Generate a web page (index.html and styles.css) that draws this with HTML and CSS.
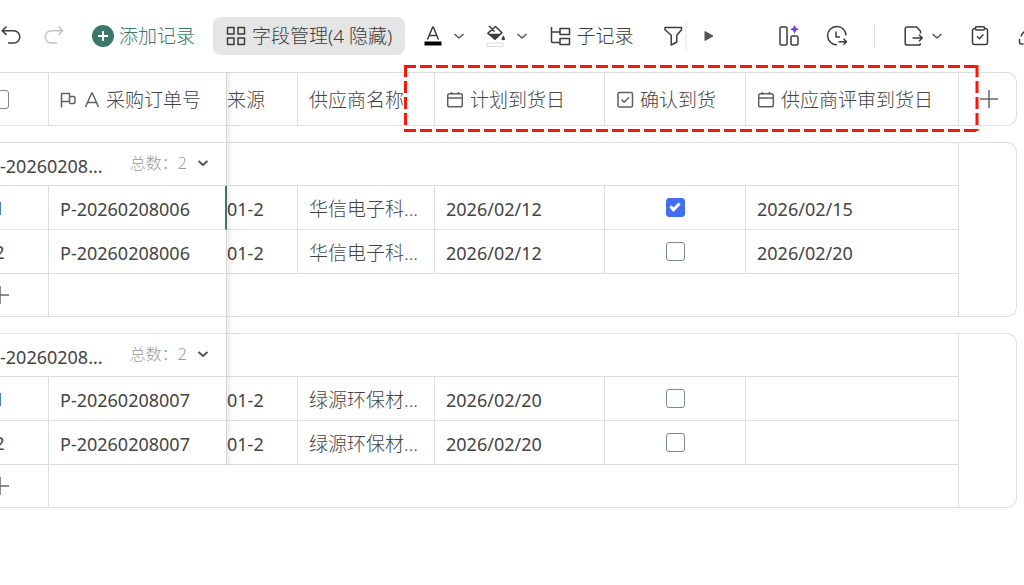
FILE: index.html
```html
<!DOCTYPE html>
<html lang="zh-CN">
<head>
<meta charset="utf-8">
<meta name="viewport" content="width=device-width, initial-scale=1">
<title>采购订单</title>
<link rel="stylesheet" href="styles.css">
</head>
<body>
<svg class="defs" aria-hidden="true">
  <symbol id="chevron" viewBox="0 0 12 12"><path d="M1.500 4 6 8l4.500-4"/></symbol>
  <symbol id="calendar" viewBox="0 0 18 18"><path d="M3.500 2.800h11a1.800 1.800 0 0 1 1.800 1.800v9.300a1.800 1.800 0 0 1-1.800 1.800h-11a1.800 1.800 0 0 1-1.800-1.800V4.600a1.800 1.800 0 0 1 1.800-1.800zM1.700 7h14.600M5.500 1v2.800M12.500 1v2.800"/></symbol>
  <symbol id="plus" viewBox="0 0 20 20"><path d="M10 1v18M1 10h18"/></symbol>
</svg>

<header class="toolbar">
  <div class="history">
    <button class="tool" aria-label="撤销"><svg class="icon-lg" viewBox="0 0 22 22"><path d="M6.500 1.500 2.200 5.700l4.300 4.200M2.400 5.700h11.300a5.900 5.900 0 0 1 0 12.300H8"/></svg></button>
    <button class="tool disabled" aria-label="重做" disabled><svg class="icon-lg" viewBox="0 0 22 22"><path d="M15.500 1.500 19.800 5.700l-4.300 4.200M19.600 5.700H8.300a5.900 5.900 0 0 0 0 12.300H14"/></svg></button>
  </div>
  <button class="tool add"><svg class="icon-add" viewBox="0 0 24 24"><circle cx="12" cy="12" r="11"/><path d="M12 7v10M7 12h10"/></svg><span>添加记录</span></button>
  <button class="tool pill"><svg class="icon-md" viewBox="0 0 20 20"><path d="M1.500 1.500h6.500v6.500H1.500zM12 1.500h6.500v6.500H12zM1.500 12h6.500v6.500H1.500zM12 12h6.500v6.500H12z"/></svg><span>字段管理(4 隐藏)</span></button>
  <div class="tools">
    <div class="split">
      <button class="tool" aria-label="文字颜色"><svg class="icon-md" viewBox="0 0 20 20"><path d="M4.500 13.500 9.700 1h.6l5.200 12.500M6.300 9.500h7.400"/><path class="ink" d="M1.500 15.500h17v4h-17z"/></svg></button>
      <button class="tool" aria-label="文字颜色选项"><svg class="icon-sm"><use href="#chevron"/></svg></button>
    </div>
    <div class="split">
      <button class="tool" aria-label="填充颜色"><svg class="icon-fill" viewBox="0 0 20 22"><path d="M1.800 8.200 9.500 1.500l6.500 6.200-7 6.600zM3 1l5.500 5.500M8.500 2.500 3.500 7"/><path class="solid" d="M1.800 8.800h13.400l-6.300 5.800zM17.300 10.500q3.400 4.400 0 4.800-3.400-.4 0-4.800z"/><path class="swatch" d="M1 18h16v3.500H1z"/></svg></button>
      <button class="tool" aria-label="填充颜色选项"><svg class="icon-sm"><use href="#chevron"/></svg></button>
    </div>
    <button class="tool child"><svg class="icon-lg" viewBox="0 0 22 22"><path d="M2.500 2v14.500a1 1 0 0 0 1 1H11M2.500 7H11M11 3.500h9.500v6H11zM11 13.500h9.500v6H11z"/></svg><span>子记录</span></button>
    <div class="filter">
      <button class="tool" aria-label="筛选"><svg class="icon-lg" viewBox="0 0 22 22"><path d="M2 2.500h16.500v2.200l-4.700 5.600V17l-5.600 3v-9.700L2 4.700z"/></svg></button>
      <button class="tool" aria-label="更多工具"><svg class="icon-play" viewBox="0 0 16 16"><path d="M4 3.500v9l8-4.500z"/></svg></button>
    </div>
  </div>
  <div class="actions">
    <button class="tool" aria-label="智能字段"><svg class="icon-lg" viewBox="0 0 22 22"><rect x="2" y="2" width="7" height="18" rx="1.500"/><rect x="13" y="11" width="7" height="9" rx="1.500"/><path class="spark" d="M16.500 0 18 3l3 1.200L18 5.500l-1.500 3.200L15 5.500l-3-1.300L15 3z"/></svg></button>
    <button class="tool" aria-label="历史记录"><svg class="icon-lg" viewBox="0 0 22 22"><path d="M11 19.800A9.200 9.200 0 1 1 20 10.500M10 6.500V12h4M12.500 16.700h8M17.500 13.700l3 3-3 3"/></svg></button>
    <span class="divider"></span>
    <div class="export">
      <button class="tool" aria-label="导出"><svg class="icon-lg" viewBox="0 0 22 22"><path d="M17.500 8.500V6.200L13.700 2H4a1.800 1.800 0 0 0-1.800 1.800v14.400A1.800 1.800 0 0 0 4 20h11.700a1.800 1.800 0 0 0 1.800-1.800M9.500 13h9.800M16 9.700l3.300 3.300-3.300 3.300"/></svg></button>
      <button class="tool" aria-label="导出选项"><svg class="icon-sm"><use href="#chevron"/></svg></button>
    </div>
    <button class="tool" aria-label="任务"><svg class="icon-lg" viewBox="0 0 22 22"><path d="M6.500 3.500H5.500A2 2 0 0 0 3.500 5.500v12a2 2 0 0 0 2 2h11a2 2 0 0 0 2-2v-12a2 2 0 0 0-2-2h-1M7.500 1.800h7a1 1 0 0 1 1 1V4a1 1 0 0 1-1 1h-7a1 1 0 0 1-1-1V2.800a1 1 0 0 1 1-1zM8 11.300l2.400 2.400 4-4.200"/></svg></button>
    <button class="tool" aria-label="分享"><svg class="icon-lg" viewBox="0 0 22 22"><path d="M6.500 19H4a1.500 1.500 0 0 1-1.500-1.500V14M4 11.500q1-3.800 4.500-5.500L15 3"/></svg></button>
  </div>
</header>

<main class="sheet">
  <section class="card heading">
    <table>
      <colgroup><col class="c-index"><col class="c-order"><col class="c-source"><col class="c-vendor"><col class="c-plan"><col class="c-confirm"><col><col class="c-end"></colgroup>
      <thead>
        <tr>
          <th class="index"><input type="checkbox" aria-label="全选"></th>
          <th class="plain"><span class="field order"><svg class="icon-field" viewBox="0 0 18 18"><path d="M1.500 16.500V2.500h8v8h-8M9.500 5.500h4a1.500 1.500 0 0 1 1.500 1.500v4a1.500 1.500 0 0 1-1.500 1.500h-3a1 1 0 0 1-1-1v-1"/></svg><svg class="icon-field" viewBox="0 0 18 18"><path d="M2.500 16 8.700 2h.6l6.200 14M4.700 11.500h8.600"/></svg>采购订单号</span></th>
          <th class="flush">来源</th>
          <th>供应商名称</th>
          <th><span class="field"><svg class="icon-field"><use href="#calendar"/></svg>计划到货日</span></th>
          <th><span class="field"><svg class="icon-field" viewBox="0 0 18 18"><rect x="2" y="1.500" width="14.500" height="14.500" rx="1.500"/><path d="M5.500 8.500l2.700 2.700 4.800-5"/></svg>确认到货</span></th>
          <th><span class="field"><svg class="icon-field"><use href="#calendar"/></svg>供应商评审到货日</span></th>
          <th class="end"><button class="tool new-field" aria-label="添加字段"><svg class="icon-md"><use href="#plus"/></svg></button></th>
        </tr>
      </thead>
    </table>
    <svg class="highlight" aria-hidden="true"><line x1="0" y1="1.500" x2="100%" y2="1.500"/><line x1="0" y1="65.500" x2="100%" y2="65.500"/><line x1="1.500" y1="0" x2="1.500" y2="66"/><line x1="100%" y1="0" x2="100%" y2="66"/></svg>
  </section>

  <section class="card">
    <table>
      <colgroup><col class="c-index"><col class="c-order"><col class="c-source"><col class="c-vendor"><col class="c-plan"><col class="c-confirm"><col><col class="c-end"></colgroup>
      <tbody>
        <tr class="group">
          <td class="plain" colspan="2"><div class="group-title"><span>-20260208...</span><button class="tool total">总数：2<svg class="icon-sm"><use href="#chevron"/></svg></button></div></td>
          <td colspan="5"></td>
          <td class="end" rowspan="4"></td>
        </tr>
        <tr>
          <td class="index">1</td><td class="plain current">P-20260208006</td><td class="flush">01-2</td><td class="vendor">华信电子科...</td><td>2026/02/12</td>
          <td class="check"><input type="checkbox" aria-label="确认到货" checked></td><td>2026/02/15</td>
        </tr>
        <tr>
          <td class="index">2</td><td class="plain">P-20260208006</td><td class="flush">01-2</td><td class="vendor">华信电子科...</td><td>2026/02/12</td>
          <td class="check"><input type="checkbox" aria-label="确认到货"></td><td>2026/02/20</td>
        </tr>
        <tr class="append">
          <td class="index"><button class="tool new-row" aria-label="添加行"><svg class="icon-md"><use href="#plus"/></svg></button></td><td colspan="6"></td>
        </tr>
      </tbody>
    </table>
  </section>

  <section class="card">
    <table>
      <colgroup><col class="c-index"><col class="c-order"><col class="c-source"><col class="c-vendor"><col class="c-plan"><col class="c-confirm"><col><col class="c-end"></colgroup>
      <tbody>
        <tr class="group">
          <td class="plain" colspan="2"><div class="group-title"><span>-20260208...</span><button class="tool total">总数：2<svg class="icon-sm"><use href="#chevron"/></svg></button></div></td>
          <td colspan="5"></td>
          <td class="end" rowspan="4"></td>
        </tr>
        <tr>
          <td class="index">1</td><td class="plain">P-20260208007</td><td class="flush">01-2</td><td class="vendor">绿源环保材...</td><td>2026/02/20</td>
          <td class="check"><input type="checkbox" aria-label="确认到货"></td><td></td>
        </tr>
        <tr>
          <td class="index">2</td><td class="plain">P-20260208007</td><td class="flush">01-2</td><td class="vendor">绿源环保材...</td><td>2026/02/20</td>
          <td class="check"><input type="checkbox" aria-label="确认到货"></td><td></td>
        </tr>
        <tr class="append">
          <td class="index"><button class="tool new-row" aria-label="添加行"><svg class="icon-md"><use href="#plus"/></svg></button></td><td colspan="6"></td>
        </tr>
      </tbody>
    </table>
  </section>
  <div class="freeze-edge"></div>
</main>
</body>
</html>
```
FILE: styles.css
```css
* { box-sizing: border-box; }

body {
  margin: 0;
  overflow-x: hidden;
  background: #fff;
  color: #444;
  font: 400 18px/24px "Noto Sans", "Noto Sans CJK SC", sans-serif;
}

.defs { position: absolute; width: 0; height: 0; }

svg { display: block; flex: none; fill: none; stroke: currentColor; stroke-width: 1.5; stroke-linejoin: round; }
.icon-lg { width: 22px; height: 22px; }
.icon-md { width: 20px; height: 20px; }
.icon-fill { width: 20px; height: 22px; }
.icon-sm { width: 12px; height: 12px; color: #555; }
.icon-play { width: 16px; height: 16px; fill: #555; stroke: #555; stroke-width: 1; }
.icon-add { width: 24px; height: 24px; }
.icon-add circle { fill: #39786a; stroke: none; }
.icon-add path { stroke: #fff; stroke-width: 2; }
.icon-field { width: 18px; height: 18px; color: #606060; }
.solid { fill: currentColor; stroke: none; }
.ink { fill: #000; stroke: none; }
.swatch { stroke: #ddd; stroke-width: 1; }
.spark { fill: #6a3de8; stroke: none; }

.tool {
  display: flex;
  align-items: center;
  gap: 6px;
  padding: 0;
  border: 0;
  background: none;
  color: #3c3c3c;
  font: inherit;
  font-size: 19px;
  font-weight: 300;
  white-space: nowrap;
}

.toolbar {
  display: flex;
  align-items: center;
  gap: 18px;
  height: 72px;
  overflow: hidden;
}
.history { display: flex; align-items: center; gap: 21px; }
.tools { display: flex; align-items: center; gap: 21px; }
.tool.disabled { color: #c4c4c4; }
.tool.add { gap: 4px; padding-left: 8px; color: #39786a; }
.tool.pill { height: 38px; padding: 0 13px; border-radius: 8px; background: #e5e5e5; }
.tool.child { gap: 5px; }
.split { display: flex; align-items: center; gap: 10px; }
.filter { display: flex; align-items: center; gap: 14px; padding-left: 9px; }
.filter .tool:first-child { height: 30px; border-right: 2px solid #f2f2f2; }
.actions { display: flex; align-items: center; gap: 26px; margin-left: auto; margin-right: -15px; }
.divider { width: 1px; height: 22px; background: #ddd; }
.export { display: flex; align-items: center; gap: 6px; margin-left: 2px; }

/* The sheet is scrolled so that half of the index column is out of view. */
.sheet {
  position: relative;
  display: flex;
  flex-direction: column;
  gap: 16px;
  margin: 0 7px 0 -49px;
}

.card {
  position: relative;
  border: 1px solid #dedede;
  border-left: 0;
  border-radius: 0 10px 10px 0;
}

table { width: 100%; table-layout: fixed; border-collapse: separate; border-spacing: 0; }
.c-index { width: 98px; }
.c-order { width: 178px; }
.c-source { width: 71px; }
.c-vendor { width: 137px; }
.c-plan { width: 170px; }
.c-confirm { width: 141px; }
.c-end { width: 57px; }

th, td {
  height: 44px;
  padding: 3px 0 0 11px;
  border: 0 solid #dedede;
  border-width: 0 1px 1px 0;
  text-align: left;
  white-space: nowrap;
}
th { height: 52px; padding: 2px 0 0 11px; border-bottom: 0; font-size: 19px; font-weight: 300; }
.group td { height: 43px; }
.append td { height: 42px; border-bottom: 0; }
.plain { border-right: 0; }
.flush { padding-left: 0; }
.vendor { font-size: 19px; font-weight: 300; }
.group .end, .end { padding: 0; border: 0; }
.index, .check { padding: 0; text-align: center; }
.current { position: relative; z-index: 1; border-right: 2px solid #39786a; }

.field { display: flex; align-items: center; gap: 6px; }
.order { gap: 5px; }
.tool.new-field { padding-left: 20px; color: #666; }
.tool.new-row { margin: 0 auto; color: #666; }

.group .plain { padding-left: 49px; }
.group-title { display: flex; align-items: center; justify-content: space-between; padding-right: 18px; }
.tool.total { gap: 10px; padding-bottom: 5px; color: #999; font-size: 16px; }
.total svg { stroke-width: 2; }

input[type="checkbox"] {
  display: block;
  appearance: none;
  width: 19px;
  height: 19px;
  margin: 0 auto;
  border: 1px solid #80848c;
  border-radius: 3px;
  background: #fff;
}
input[type="checkbox"]:checked {
  border-color: #426ef4;
  background: #426ef4;
}
input[type="checkbox"]:checked::after {
  content: "";
  display: block;
  width: 3px;
  height: 7px;
  margin: 2px auto;
  border: solid #fff;
  border-width: 0 3px 3px 0;
  transform: rotate(45deg);
}

/* Edge and shadow of the frozen columns, over the scrolled ones. */
.freeze-edge {
  position: absolute;
  top: 0;
  bottom: 43px;
  left: 275px;
  width: 8px;
  border-left: 1px solid #d4d4d4;
  background: linear-gradient(to right, rgba(0, 0, 0, 0.07), transparent);
  pointer-events: none;
}

.highlight {
  position: absolute;
  top: -8px;
  left: 453px;
  width: calc(100% - 492px);
  height: 67px;
  overflow: visible;
  stroke: #fb1605;
  stroke-width: 3;
  stroke-dasharray: 12 4;
  pointer-events: none;
}
```
